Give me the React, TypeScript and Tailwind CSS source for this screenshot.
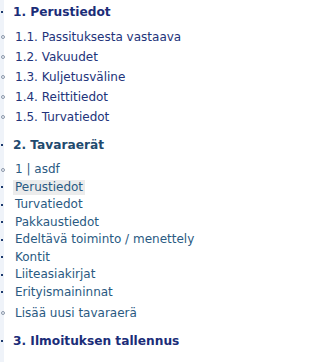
const font = { fontFamily: '"DejaVu Sans", Verdana, sans-serif' };

function Disc() {
  return <span className="block h-[2px] w-[2px] bg-[#1d3a6e]" />;
}

function Circle() {
  return <span className="block h-[4px] w-[4px] rounded-full border border-[#8a96a8]" />;
}

function Heading({ text, color, className }: { text: string; color: string; className: string }) {
  return (
    <div className={`flex items-center ${className}`}>
      <div className="flex w-[13px] shrink-0 pl-[1px]">
        <Disc />
      </div>
      <span className={`text-[12.2px] font-bold ${color}`}>{text}</span>
    </div>
  );
}

function Item({
  text,
  bullet,
  color,
  height,
  active,
}: {
  text: string;
  bullet: "disc" | "circle";
  color: string;
  height: string;
  active?: boolean;
}) {
  return (
    <div className={`flex items-center ${height}`}>
      <div className="flex w-[13px] shrink-0 pl-[1px]">
        {bullet === "disc" ? <Disc /> : <Circle />}
      </div>
      <span
        className={`px-[2px] text-[12px] leading-[15px] ${color} ${active ? "bg-[#ececec]" : ""}`}
      >
        {text}
      </span>
    </div>
  );
}

export default function App() {
  const perustiedot = [
    "1.1. Passituksesta vastaava",
    "1.2. Vakuudet",
    "1.3. Kuljetusväline",
    "1.4. Reittitiedot",
    "1.5. Turvatiedot",
  ];
  const erat = [
    "Perustiedot",
    "Turvatiedot",
    "Pakkaustiedot",
    "Edeltävä toiminto / menettely",
    "Kontit",
    "Liiteasiakirjat",
    "Erityismaininnat",
  ];

  return (
    <div
      className="h-[362px] w-[210px] overflow-hidden bg-[linear-gradient(to_right,#eff3f9_4px,#ffffff_4px)]"
      style={font}
    >
      <div className="flex flex-col">
        <Heading text="1. Perustiedot" color="text-[#1b2d78]" className="h-[24px]" />
        <div className="mt-[3px] flex flex-col">
          {perustiedot.map((t) => (
            <Item key={t} text={t} bullet="circle" color="text-[#22337a]" height="h-[20px]" />
          ))}
        </div>
        <Heading text="2. Tavaraerät" color="text-[#1f4a6e]" className="mt-[6px] h-[24px]" />
        <div className="mt-[4px] flex flex-col">
          <Item text="1 | asdf" bullet="circle" color="text-[#2a5a82]" height="h-[17.5px]" />
          {erat.map((t, i) => (
            <Item
              key={t}
              text={t}
              bullet="disc"
              color="text-[#2a5a82]"
              height="h-[17.5px]"
              active={i === 0}
            />
          ))}
          <Item text="Lisää uusi tavaraerä" bullet="circle" color="text-[#2a5a82]" height="mt-[2px] h-[20px]" />
        </div>
        <Heading text="3. Ilmoituksen tallennus" color="text-[#1b2d78]" className="mt-[6px] h-[24px]" />
      </div>
    </div>
  );
}
